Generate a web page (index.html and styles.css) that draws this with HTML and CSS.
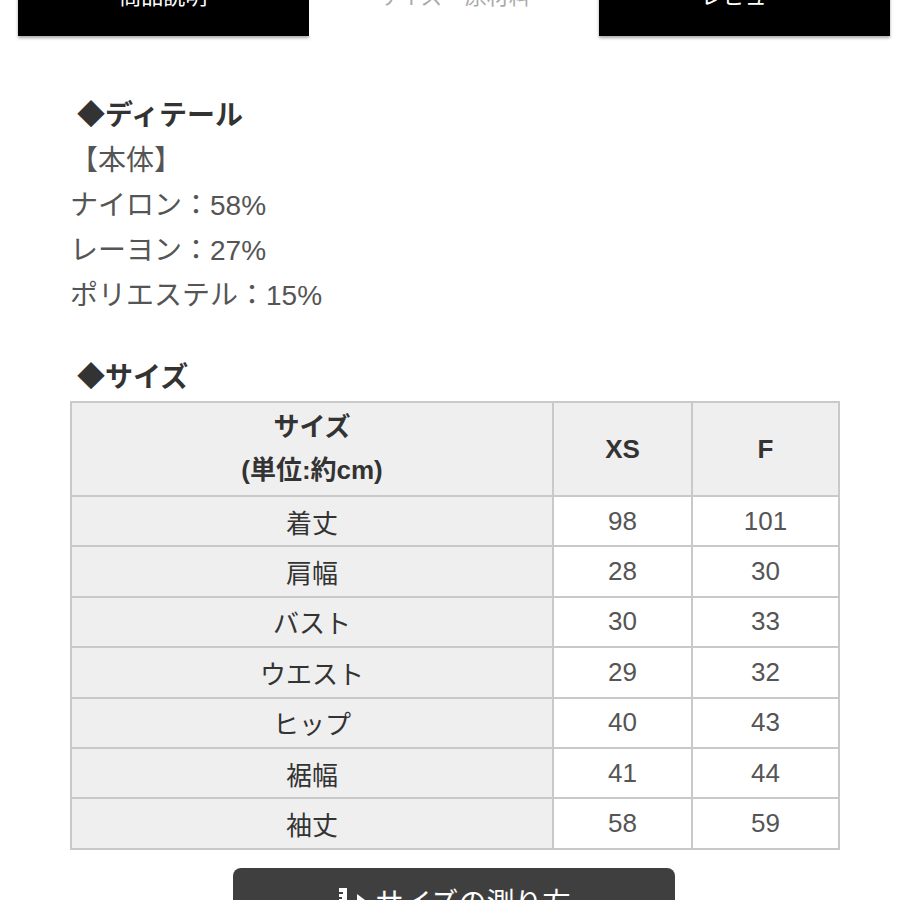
FILE: index.html
```html
<!DOCTYPE html>
<html lang="ja">
<head>
<meta charset="utf-8">
<title>サイズ・原材料</title>
<link rel="stylesheet" href="styles.css">
</head>
<body>
<div class="tabs">
  <div class="tab dark">商品説明</div>
  <div class="tab active">サイズ・原材料</div>
  <div class="tab dark">レビュー</div>
</div>
<div class="content">
  <div class="block">
    <div class="heading">◆ディテール</div>
    <div class="line">【本体】</div>
    <div class="line">ナイロン：58%</div>
    <div class="line">レーヨン：27%</div>
    <div class="line">ポリエステル：15%</div>
  </div>
  <div class="heading size-heading">◆サイズ</div>
  <table class="size-table">
    <colgroup><col class="c1"><col class="c2"><col class="c3"></colgroup>
    <thead>
      <tr><th class="label">サイズ<br>(単位:約cm)</th><th>XS</th><th>F</th></tr>
    </thead>
    <tbody>
      <tr><th class="label">着丈</th><td>98</td><td>101</td></tr>
      <tr><th class="label">肩幅</th><td>28</td><td>30</td></tr>
      <tr><th class="label">バスト</th><td>30</td><td>33</td></tr>
      <tr><th class="label">ウエスト</th><td>29</td><td>32</td></tr>
      <tr><th class="label">ヒップ</th><td>40</td><td>43</td></tr>
      <tr><th class="label">裾幅</th><td>41</td><td>44</td></tr>
      <tr><th class="label">袖丈</th><td>58</td><td>59</td></tr>
    </tbody>
  </table>
  <div class="btn-wrap">
    <div class="measure-btn">
      <svg class="ruler" width="36" height="30" viewBox="0 0 36 30" aria-hidden="true">
        <rect x="2" y="0" width="8" height="30" fill="#fff"/>
        <rect x="2" y="4" width="4" height="2" fill="#3f3f3f"/>
        <rect x="2" y="9" width="3" height="2" fill="#3f3f3f"/>
        <rect x="2" y="14" width="4" height="2" fill="#3f3f3f"/>
        <path d="M20 6 L32 15 L20 15 Z" fill="#fff"/>
      </svg>
      <span>サイズの測り方</span>
    </div>
  </div>
</div>
</body>
</html>
```
FILE: styles.css
```css
html, body {
  margin: 0;
  padding: 0;
  background: #fff;
}
body {
  font-family: "Liberation Sans", "Noto Sans CJK JP", "Noto Sans", sans-serif;
  color: #444;
  overflow: hidden;
  height: 900px;
}
.tabs {
  display: flex;
  margin-top: -40px;
  padding: 0 10px 0 18px;
  height: 76px;
}
.tab {
  flex: 1;
  display: flex;
  align-items: center;
  justify-content: center;
  font-size: 22px;
  padding-bottom: 8px;
  box-sizing: border-box;
}
.tab.dark {
  background: #000;
  color: #fff;
  box-shadow: 0 2px 3px rgba(0, 0, 0, 0.35);
}
.tab.active {
  background: #fff;
  color: #aaa;
}
.content {
  padding: 57px 0 0 70px;
}
.heading {
  font-size: 28px;
  font-weight: 700;
  color: #333;
  line-height: 45px;
  margin-left: 7px;
}
.line {
  font-size: 28px;
  line-height: 45px;
  color: #555;
}
.line:first-of-type {
  margin-left: -8px;
}
.size-heading {
  margin-top: 37px;
}
.size-table {
  border-collapse: collapse;
  width: 768px;
  margin-top: 1px;
  table-layout: fixed;
  font-size: 26px;
}
.c1 { width: 482px; }
.c2 { width: 139px; }
.c3 { width: 147px; }
.size-table th,
.size-table td {
  border: 2px solid #c9c9c9;
  text-align: center;
  padding: 0;
  height: 48.4px;
}
.size-table thead th {
  background: #efefef;
  font-weight: 700;
  color: #333;
  height: 92px;
  line-height: 43px;
}
.size-table tbody th {
  background: #efefef;
  font-weight: 400;
  color: #333;
}
.size-table td {
  background: #fff;
  color: #555;
}
.btn-wrap {
  width: 768px;
  display: flex;
  justify-content: center;
  margin-top: 18px;
}
.measure-btn {
  width: 442px;
  height: 70px;
  background: #3f3f3f;
  border-radius: 8px;
  display: flex;
  align-items: flex-start;
  justify-content: center;
  padding-top: 18px;
  box-sizing: border-box;
  color: #fff;
  font-size: 28px;
  line-height: 36px;
  gap: 2px;
}
.ruler {
  margin-top: 2px;
}
```
